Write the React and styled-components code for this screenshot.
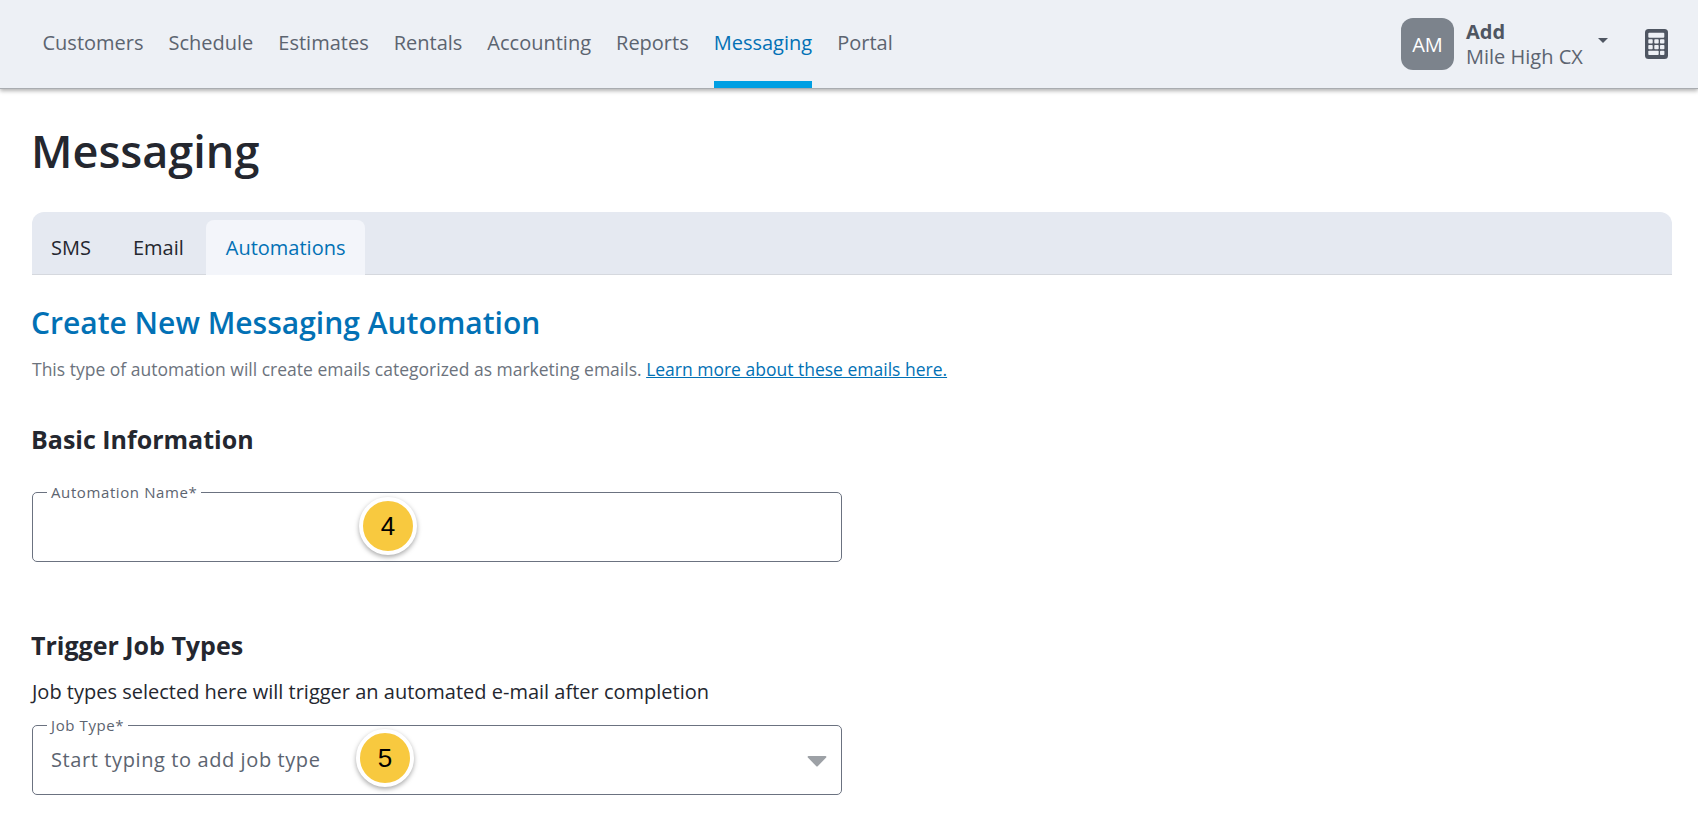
import React from 'react'
import styled, { createGlobalStyle } from 'styled-components'

const GlobalStyle = createGlobalStyle`
  html, body {
    margin: 0;
    padding: 0;
    background: #fff;
    font-family: "Open Sans", "Liberation Sans", sans-serif;
  }
  * { box-sizing: border-box; }
`

const Header = styled.header`
  display: flex;
  justify-content: space-between;
  align-items: stretch;
  height: 89px;
  padding: 0 30px 0 32px;
  background: #edf0f5;
  border-bottom: 1px solid #a9acb0;
  box-shadow: 0 2px 4px rgba(0, 0, 0, 0.3);
`
const Nav = styled.nav`
  display: flex;
  gap: 25px;
  padding-left: 10.5px;
`
const NavItem = styled.a`
  display: flex;
  align-items: center;
  height: 88px;
  padding-bottom: 4px;
  font-size: 20px;
  color: ${p => (p.$active ? '#0271b5' : '#5c6470')};
  border-bottom: 7px solid ${p => (p.$active ? '#009fe3' : 'transparent')};
  padding-top: 7px;
`
const UserArea = styled.div`
  display: flex;
  align-items: center;
`
const Avatar = styled.div`
  display: flex;
  align-items: center;
  justify-content: center;
  width: 53px;
  height: 52px;
  border-radius: 12px;
  background: #7c838c;
  color: #fff;
  font-size: 20px;
`
const UserText = styled.div`
  display: flex;
  flex-direction: column;
  margin-left: 12px;
  width: 122px;
  line-height: 25px;
`
const UserName = styled.span`
  font-size: 20px;
  font-weight: 700;
  color: #4f5662;
`
const Company = styled.span`
  font-size: 20px;
  color: #5c6470;
  white-space: nowrap;
`
const Caret = styled.span`
  width: 0;
  height: 0;
  margin: 0 0 8px 10px;
  border-left: 5px solid transparent;
  border-right: 5px solid transparent;
  border-top: 5px solid #4f5662;
`
const CalcIcon = styled.svg`
  display: block;
  width: 23px;
  height: 30px;
  margin-left: 37px;
`

const Main = styled.main`
  padding: 0 26px 0 32px;
`
const PageTitle = styled.h1`
  margin: 0 0 0 -1px;
  padding-top: 31px;
  height: 123px;
  font-size: 45px;
  line-height: 61px;
  font-weight: 600;
  color: #24272f;
`
const TabBar = styled.div`
  display: flex;
  align-items: flex-end;
  gap: 2px;
  height: 63px;
  background: #e5e9f1;
  border-radius: 12px 12px 0 0;
  border-bottom: 1px solid #d5d8de;
`
const Tab = styled.button`
  height: 55px;
  margin: 0 0 -1px ${p => (p.$active ? '-1px' : '0')};
  padding: ${p => (p.$active ? '0 20px' : '0 21px 0 19px')};
  border: none;
  border-radius: 8px 8px 0 0;
  background: ${p => (p.$active ? '#f3f5fa' : 'transparent')};
  color: ${p => (p.$active ? '#0271b5' : '#24272f')};
  font-family: inherit;
  font-size: 20px;
`
const Heading = styled.h2`
  margin: 28px 0 0 -1px;
  font-size: 30px;
  line-height: 40px;
  font-weight: 600;
  color: #0271b5;
`
const Note = styled.p`
  margin: 14px 0 0;
  font-size: 17.5px;
  line-height: 24px;
  color: #6c737d;
`
const NoteLink = styled.a`
  color: #0271b5;
  text-decoration: underline;
`
const SectionTitle = styled.h3`
  margin: ${p => p.$top}px 0 0 -1px;
  font-size: 25px;
  line-height: 33px;
  font-weight: 700;
  color: #24272f;
`
const Hint = styled.p`
  margin: 17px 0 0;
  font-size: 20px;
  line-height: 26px;
  color: #24272f;
`
const Field = styled.fieldset`
  position: relative;
  width: 810px;
  height: 79px;
  margin: ${p => p.$top}px 0 0;
  padding: 0 18px;
  border: 1px solid #6b7280;
  border-radius: 5px;
`
const FieldLabel = styled.legend`
  padding: 0 4px;
  margin-left: -4px;
  font-size: 15px;
  line-height: 18px;
  letter-spacing: 0.6px;
  color: #5c6470;
`
const Placeholder = styled.span`
  display: block;
  margin-top: 12px;
  font-size: 20px;
  line-height: 27px;
  letter-spacing: 0.6px;
  color: #5c6470;
`
const FieldCaret = styled.svg`
  position: absolute;
  right: 14px;
  top: 21px;
  width: 20px;
  height: 12px;
`
const Badge = styled.span`
  position: absolute;
  top: ${p => p.$top}px;
  left: ${p => p.$left}px;
  display: flex;
  align-items: center;
  justify-content: center;
  width: 58px;
  height: 58px;
  border: 4px solid #fff;
  border-radius: 50%;
  background: #f8c93f;
  box-shadow: 0 2px 5px rgba(0, 0, 0, 0.35);
  color: #000;
  font-family: "Liberation Sans", Arial, sans-serif;
  font-size: 26px;
`

const NAV = ['Customers', 'Schedule', 'Estimates', 'Rentals', 'Accounting', 'Reports', 'Messaging', 'Portal']

const Calculator = () => (
  <CalcIcon viewBox="0 0 23 30">
    <rect width="23" height="30" rx="3.5" fill="#4f5662" />
    <rect x="3.3" y="3.7" width="16" height="5" rx="1" fill="#edf0f5" />
    {[10.3, 16].map(y =>
      [3.3, 9.3, 15].map(x => <rect key={`${x}-${y}`} x={x} y={y} width="4.4" height="4.2" rx="0.8" fill="#edf0f5" />)
    )}
    <rect x="3.3" y="21.7" width="10.4" height="4.3" rx="0.8" fill="#edf0f5" />
    <rect x="15" y="21.7" width="4.4" height="4.3" rx="0.8" fill="#edf0f5" />
  </CalcIcon>
)

export default function App() {
  return (
    <>
      <GlobalStyle />
      <Header>
        <Nav>
          {NAV.map(item => (
            <NavItem key={item} $active={item === 'Messaging'}>{item}</NavItem>
          ))}
        </Nav>
        <UserArea>
          <Avatar>AM</Avatar>
          <UserText>
            <UserName>Add</UserName>
            <Company>Mile High CX</Company>
          </UserText>
          <Caret />
          <Calculator />
        </UserArea>
      </Header>
      <Main>
        <PageTitle>Messaging</PageTitle>
        <TabBar>
          <Tab>SMS</Tab>
          <Tab>Email</Tab>
          <Tab $active>Automations</Tab>
        </TabBar>
        <Heading>Create New Messaging Automation</Heading>
        <Note>
          This type of automation will create emails categorized as marketing emails.{' '}
          <NoteLink>Learn more about these emails here.</NoteLink>
        </Note>
        <SectionTitle $top={42}>Basic Information</SectionTitle>
        <Field $top={27}>
          <FieldLabel>Automation Name*</FieldLabel>
          <Badge $top={-4} $left={326}>4</Badge>
        </Field>
        <SectionTitle $top={67}>Trigger Job Types</SectionTitle>
        <Hint>Job types selected here will trigger an automated e-mail after completion</Hint>
        <Field $top={11}>
          <FieldLabel>Job Type*</FieldLabel>
          <Placeholder>Start typing to add job type</Placeholder>
          <FieldCaret viewBox="0 0 20 12">
            <path d="M1.5 1h17a1 1 0 0 1 .7 1.6l-8.5 8.6a1 1 0 0 1-1.4 0L.8 2.6A1 1 0 0 1 1.5 1z" fill="#9da1a6" />
          </FieldCaret>
          <Badge $top={-5} $left={323}>5</Badge>
        </Field>
      </Main>
    </>
  )
}
